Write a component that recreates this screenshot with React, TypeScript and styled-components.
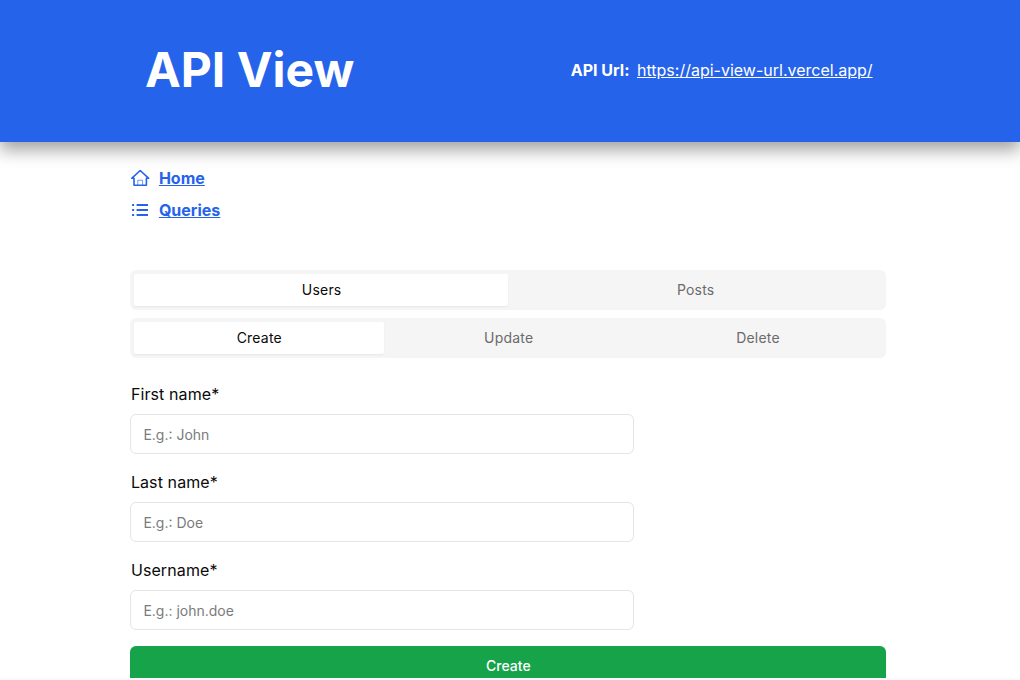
import React from "react";
import styled, { createGlobalStyle } from "styled-components";

const GlobalStyle = createGlobalStyle`
  *, *::before, *::after { box-sizing: border-box; }
  html, body { margin: 0; height: 100%; overflow: hidden; }
  body { font-family: Inter, sans-serif; font-size: 16px; line-height: 24px; color: #0a0a0a; background: #f9f9ff; }
`;

const Page = styled.div`
  height: 678px;
  overflow: hidden;
  background: #fff;
`;
const Header = styled.header`
  height: 142px;
  padding-left: 130.4px;
  background: #2563eb;
  color: #fff;
  box-shadow: 0 8px 16px rgba(0, 0, 0, 0.37);
`;
const HeaderInner = styled.div`
  display: flex;
  align-items: center;
  justify-content: space-between;
  width: 756px;
  height: 140px;
  padding: 0 13.8px 0 14.5px;
`;
const Title = styled.h1`
  margin: 0;
  font-size: 48px;
  line-height: 48px;
  font-weight: 700;
`;
const ApiUrl = styled.div`
  display: flex;
  gap: 7.5px;
`;
const Label = styled.strong`
  font-weight: 700;
`;
const UrlLink = styled.a`
  color: inherit;
  text-decoration: underline;
`;
const Main = styled.main`
  width: 756px;
  margin: 24px 0 0 130.4px;
`;
const Nav = styled.nav`
  display: flex;
  flex-direction: column;
  gap: 8px;
  margin-bottom: 48px;
`;
const NavLink = styled.a`
  display: flex;
  align-items: center;
  gap: 8.5px;
  color: #2563eb;
  font-weight: 700;
  text-decoration: underline;
`;
const Icon = styled.svg`
  width: 20px;
  height: 20px;
  flex: none;
  fill: none;
  stroke: currentColor;
`;
const TabList = styled.div`
  display: flex;
  height: 40px;
  padding: 4px;
  margin-bottom: 8px;
  border-radius: 6px;
  background: #f5f5f5;
`;
const Tab = styled.button<{ $active?: boolean }>`
  flex: 1;
  border: 0;
  padding: 0 0 0 0.5px;
  border-radius: 2px;
  font: 400 14px/20px Inter, sans-serif;
  letter-spacing: 0.2px;
  color: ${(p) => (p.$active ? "#0a0a0a" : "#6b6b6b")};
  background: ${(p) => (p.$active ? "#fff" : "transparent")};
  box-shadow: ${(p) => (p.$active ? "0 1px 2px rgba(0, 0, 0, 0.06)" : "none")};
`;
const Form = styled.form`
  display: flex;
  flex-direction: column;
  gap: 16px;
  padding-top: 16px;
`;
const Field = styled.label`
  display: flex;
  flex-direction: column;
  gap: 8px;
`;
const FieldName = styled.span`
  padding-left: 0.5px;
  letter-spacing: 0.1px;
`;
const Input = styled.input`
  width: 504px;
  height: 40px;
  padding: 8px 12px;
  border: 1px solid #e5e5e5;
  border-radius: 6px;
  background: #fff;
  font: 400 14px/20px Inter, sans-serif;
  &::placeholder { color: #7b7b7b; opacity: 1; }
`;
const Submit = styled.button`
  height: 40px;
  padding: 0;
  border: 0;
  border-radius: 6px;
  background: #16a34a;
  color: #fff;
  font: 500 14px/20px Inter, sans-serif;
`;

const HomeIcon = () => (
  <Icon viewBox="0 0 20 20" strokeLinejoin="round" strokeLinecap="round">
    <path d="M1.7 10.3 10.2 2.5l8.5 7.8H16.4v6.9H4V10.3z" strokeWidth="1.6" />
    <path d="M7.8 16.8v-4.6h4.8v4.6" strokeWidth="1" opacity="0.65" />
  </Icon>
);

const ListIcon = () => (
  <Icon viewBox="0 0 20 20" strokeWidth="1.9">
    <path d="M2.1 5h2M2.1 10h2M2.1 15h2M6.6 5H18M6.6 10H18M6.6 15H18" />
  </Icon>
);

const fields = [
  ["First name*", "E.g.: John"],
  ["Last name*", "E.g.: Doe"],
  ["Username*", "E.g.: john.doe"],
];

export default function App() {
  return (
    <>
      <GlobalStyle />
      <Page>
        <Header>
          <HeaderInner>
            <Title>API View</Title>
            <ApiUrl>
              <Label>API Url:</Label>
              <UrlLink href="#">https://api-view-url.vercel.app/</UrlLink>
            </ApiUrl>
          </HeaderInner>
        </Header>
        <Main>
          <Nav>
            <NavLink href="#"><HomeIcon />Home</NavLink>
            <NavLink href="#"><ListIcon />Queries</NavLink>
          </Nav>
          <TabList>
            <Tab $active>Users</Tab>
            <Tab>Posts</Tab>
          </TabList>
          <TabList>
            <Tab $active>Create</Tab>
            <Tab>Update</Tab>
            <Tab>Delete</Tab>
          </TabList>
          <Form>
            {fields.map(([label, hint]) => (
              <Field key={label}>
                <FieldName>{label}</FieldName>
                <Input placeholder={hint} />
              </Field>
            ))}
            <Submit type="button">Create</Submit>
          </Form>
        </Main>
      </Page>
    </>
  );
}
